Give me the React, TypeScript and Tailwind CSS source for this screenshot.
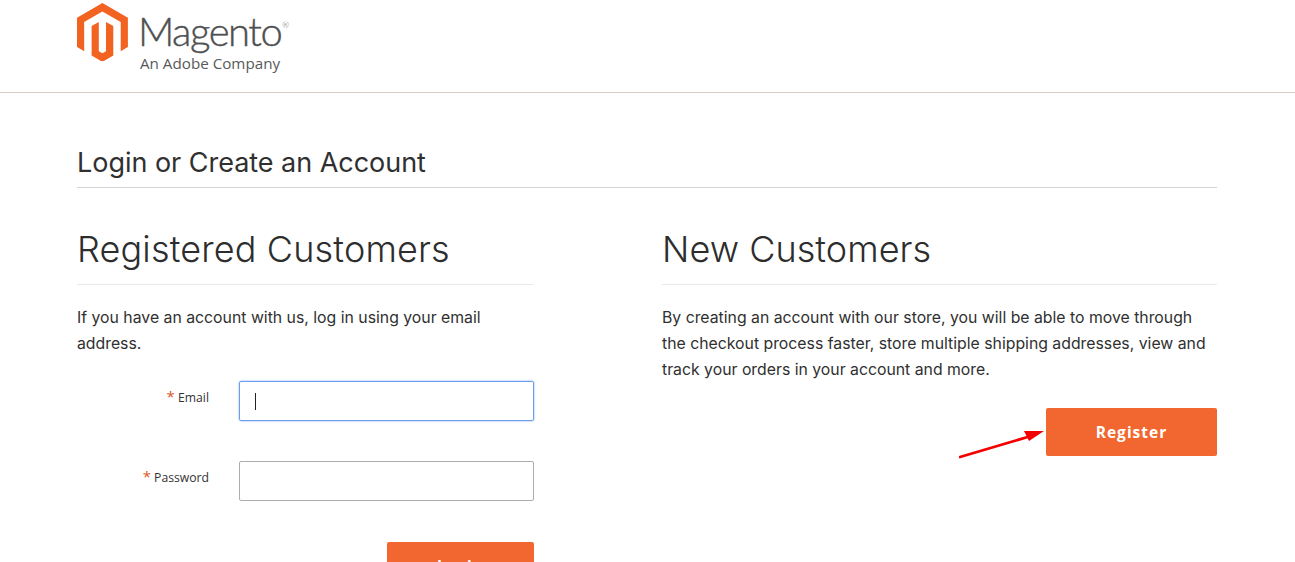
export default function App() {
  const body = "font-['Inter','Open_Sans',sans-serif]";
  return (
    <div className="h-[562px] w-full overflow-hidden bg-white font-['Open_Sans',sans-serif] text-[#333]">
      <header className="h-[93px] border-b border-[#d6cfc0] pl-[77px] pt-[3px]">
        <div className="flex items-start">
          <svg width="51" height="58" viewBox="0 0 51 58" className="shrink-0">
            <path fill="#f26322" d="M25.4 0 0 14.7v29.3l7.2 4.2-.05-29.3L25.4 8.4l18.3 10.5v29.3l7.2-4.2V14.7z" />
            <path fill="#f26322" d="M29 48.2 25.4 50.3l-3.6-2.1V18.9l-7.2 4.2.02 29.3L25.4 58.9l10.9-6.5V23.1l-7.3-4.2z" />
          </svg>
          <div className="ml-[10px] mt-[6px] flex flex-col">
            <span className="font-['Lato',sans-serif] text-[40px] font-light leading-[44px] tracking-[-1.5px] text-[#4f5052] [-webkit-text-stroke:0.4px_#4f5052]">Magento<sup className="ml-[1px] align-[14px] text-[8px] tracking-normal [-webkit-text-stroke:0]">®</sup></span>
            <span className="ml-[2px] text-[15.2px] leading-[20px] text-[#58595b]">An Adobe Company</span>
          </div>
        </div>
      </header>
      <main className="px-[78px] pl-[77px]">
        <h1 className={`mt-[51px] border-b border-[#d4d4d4] pb-[6px] text-[27px] font-[420] leading-[37px] tracking-[-0.03px] text-[#303030] ${body}`}>Login or Create an Account</h1>
        <div className="mt-[39px] flex">
          <section className="w-[457px] shrink-0">
            <h2 className={`border-b border-[#eaeaea] pb-[13px] text-[36px] font-light leading-[44px] tracking-[0.15px] text-[#2d2d2d] ${body}`}>Registered Customers</h2>
            <p className={`mt-[20px] text-[15.8px] leading-[26px] text-[#303030] ${body}`}>If you have an account with us, log in using your email address.</p>
            <div className="mt-[24px] flex items-start">
              <label className="w-[132px] pt-[8px] text-right text-[12.2px] leading-[18px] text-[#333]"><span className="text-[15px] leading-[14px] text-[#d9562c]">*</span> Email</label>
              <div className="ml-[30px] flex h-[40px] flex-1 items-center rounded-[2px] border border-[#6d9eeb] pl-[15px] shadow-[0_0_2px_#6d9eeb]"><div className="h-[17px] w-px bg-[#222]" /></div>
            </div>
            <div className="mt-[40px] flex items-start">
              <label className="w-[132px] pt-[8px] text-right text-[12.2px] leading-[18px] text-[#333]"><span className="text-[15px] leading-[14px] text-[#d9562c]">*</span> Password</label>
              <div className="ml-[30px] h-[40px] flex-1 rounded-[2px] border border-[#adadad]" />
            </div>
            <div className="mt-[41px] flex justify-end">
              <button className="h-[48px] w-[147px] rounded-[2px] bg-[#f1672f] pt-[2px] text-[15.5px] font-bold tracking-[1px] text-white">Login</button>
            </div>
          </section>
          <section className="ml-[128px] flex-1">
            <h2 className={`border-b border-[#eaeaea] pb-[13px] text-[36px] font-light leading-[44px] tracking-[0.05px] text-[#2d2d2d] ${body}`}>New Customers</h2>
            <p className={`mt-[20px] text-[15.8px] leading-[26px] text-[#303030] ${body}`}>By creating an account with our store, you will be able to move through the checkout process faster, store multiple shipping addresses, view and track your orders in your account and more.</p>
            <div className="relative mt-[25px] flex justify-end">
              <svg width="92" height="36" viewBox="0 0 92 36" className="absolute left-[297px] top-[18px]">
                <path d="M1 31 72 10" stroke="#f50000" strokeWidth="2.8" strokeLinecap="round" />
                <path d="M85 5 65 5 70 15z" fill="#f50000" />
              </svg>
              <button className="h-[48px] w-[171px] rounded-[2px] bg-[#f1672f] pt-[2px] text-[15.5px] font-bold tracking-[1px] text-white">Register</button>
            </div>
          </section>
        </div>
      </main>
    </div>
  );
}
